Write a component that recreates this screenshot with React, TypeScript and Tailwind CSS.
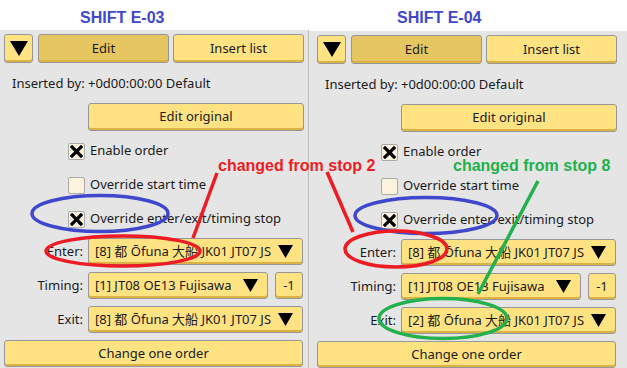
import type { ReactNode } from "react";

const uiFont = { fontFamily: '"Noto Sans", "Noto Sans CJK JP", sans-serif' };
const noteFont = { fontFamily: '"Liberation Sans", Arial, sans-serif' };

function Triangle({ w, h }: { w: number; h: number }) {
  return (
    <svg width={w} height={h} viewBox={`0 0 ${w} ${h}`}>
      <polygon points={`0,0 ${w},0 ${w / 2},${h}`} fill="#000" />
    </svg>
  );
}

function Btn({ children, className }: { children?: ReactNode; className: string }) {
  return (
    <div
      className={`flex items-center rounded-[3px] border border-[#979797] shadow-[inset_0_-2px_0_#ddb244] text-[13px] text-[#1a1a1a] ${className}`}
    >
      {children}
    </div>
  );
}

function Check({ on, label }: { on: boolean; label: string }) {
  return (
    <div className="flex items-center h-[24px]">
      <div className="w-[17px] h-[17px] rounded-[2px] border border-[#a9a9a9] bg-[#fbf3dd] flex items-center justify-center">
        {on && (
          <svg width="13" height="13" viewBox="0 0 13 13">
            <path d="M2 2 L11 11 M11 2 L2 11" stroke="#000" strokeWidth="3.2" strokeLinecap="square" />
          </svg>
        )}
      </div>
      <span className="ml-[5px] text-[13px] text-[#1a1a1a]">{label}</span>
    </div>
  );
}

function Select({ value, className }: { value: string; className: string }) {
  return (
    <Btn className={`justify-between bg-[#ffe383] pl-[6px] pr-[9px] ${className}`}>
      <span className="whitespace-nowrap">{value}</span>
      <Triangle w={15} h={13} />
    </Btn>
  );
}

function Panel({ exit }: { exit: string }) {
  return (
    <div className="flex flex-col w-[300px]" style={uiFont}>
      <div className="flex mt-[4px] h-[29px]">
        <Btn className="w-[29px] justify-center bg-[#ffe383]">
          <Triangle w={18} h={15} />
        </Btn>
        <Btn className="w-[131px] ml-[5px] justify-center bg-[#e6c660]">Edit</Btn>
        <Btn className="w-[131px] ml-[4px] justify-center bg-[#ffe383]">Insert list</Btn>
      </div>
      <div className="mt-[10px] h-[20px] leading-[20px] pl-[8px] text-[13px] text-[#1a1a1a] whitespace-nowrap">
        Inserted by: +0d00:00:00 Default
      </div>
      <Btn className="mt-[10px] ml-[84px] w-[216px] h-[28px] justify-center bg-[#ffe383]">Edit original</Btn>
      <div className="mt-[8px] flex flex-col gap-[10px] pl-[64px]">
        <Check on label="Enable order" />
        <Check on={false} label="Override start time" />
        <Check on label="Override enter/exit/timing stop" />
      </div>
      <div className="mt-[7px] flex flex-col gap-[7px] text-[13px] text-[#1a1a1a]">
        <div className="flex items-center h-[27px]">
          <span className="w-[79px] text-right">Enter:</span>
          <Select value="[8] 都 Ōfuna 大船 JK01 JT07 JS" className="ml-[5px] w-[215px] h-[27px]" />
        </div>
        <div className="flex items-center h-[27px]">
          <span className="w-[79px] text-right">Timing:</span>
          <Select value="[1] JT08 OE13 Fujisawa" className="ml-[5px] w-[180px] h-[27px]" />
          <Btn className="ml-[7px] w-[28px] h-[27px] justify-center bg-[#ffe383]">-1</Btn>
        </div>
        <div className="flex items-center h-[27px]">
          <span className="w-[79px] text-right">Exit:</span>
          <Select value={exit} className="ml-[5px] w-[215px] h-[27px]" />
        </div>
        <Btn className="w-[299px] h-[27px] justify-center bg-[#ffe383]">Change one order</Btn>
      </div>
    </div>
  );
}

export default function App() {
  return (
    <div className="relative w-[627px] h-[368px] overflow-hidden bg-white">
      <div className="flex h-full">
        <div className="flex flex-col w-[308px]">
          <div
            className="h-[30px] pt-[9px] pl-[80px] text-[16px] leading-[18px] font-bold text-[#3f48cc]"
            style={noteFont}
          >
            SHIFT E-03
          </div>
          <div className="flex-1 bg-[#e5e5e5] pl-[4px]">
            <Panel exit="[8] 都 Ōfuna 大船 JK01 JT07 JS" />
          </div>
        </div>
        <div className="w-[1px] mt-[30px] bg-[#bdbab2]" />
        <div className="flex flex-col flex-1">
          <div
            className="h-[31px] pt-[9px] pl-[88px] text-[16px] leading-[18px] font-bold text-[#3f48cc]"
            style={noteFont}
          >
            SHIFT E-04
          </div>
          <div className="flex-1 bg-[#e5e5e5] pl-[8px]">
            <Panel exit="[2] 都 Ōfuna 大船 JK01 JT07 JS" />
          </div>
        </div>
      </div>

      <svg className="absolute inset-0 pointer-events-none" width="627" height="368" viewBox="0 0 627 368" fill="none">
        <ellipse cx="100" cy="213.5" rx="68" ry="18" stroke="#3f48cc" strokeWidth="3.5" />
        <ellipse cx="426" cy="215.5" rx="71" ry="18" stroke="#3f48cc" strokeWidth="3.5" />
        <ellipse cx="123" cy="251" rx="77" ry="15" stroke="#ed1c24" strokeWidth="3.5" />
        <ellipse cx="396" cy="249" rx="51" ry="18" stroke="#ed1c24" strokeWidth="3.5" />
        <ellipse cx="443" cy="318.5" rx="64" ry="20" stroke="#22b14c" strokeWidth="3.5" />
        <line x1="217" y1="173" x2="193" y2="238" stroke="#ed1c24" strokeWidth="3.5" />
        <line x1="327" y1="172" x2="353" y2="232" stroke="#ed1c24" strokeWidth="3.5" />
        <line x1="538" y1="181" x2="478" y2="294" stroke="#22b14c" strokeWidth="3.5" />
      </svg>
      <div
        className="absolute left-[218px] top-[157px] text-[16px] leading-[18px] font-bold text-[#ed1c24] whitespace-nowrap"
        style={noteFont}
      >
        changed from stop 2
      </div>
      <div
        className="absolute left-[453px] top-[157px] text-[16px] leading-[18px] font-bold text-[#22b14c] whitespace-nowrap"
        style={noteFont}
      >
        changed from stop 8
      </div>
    </div>
  );
}
